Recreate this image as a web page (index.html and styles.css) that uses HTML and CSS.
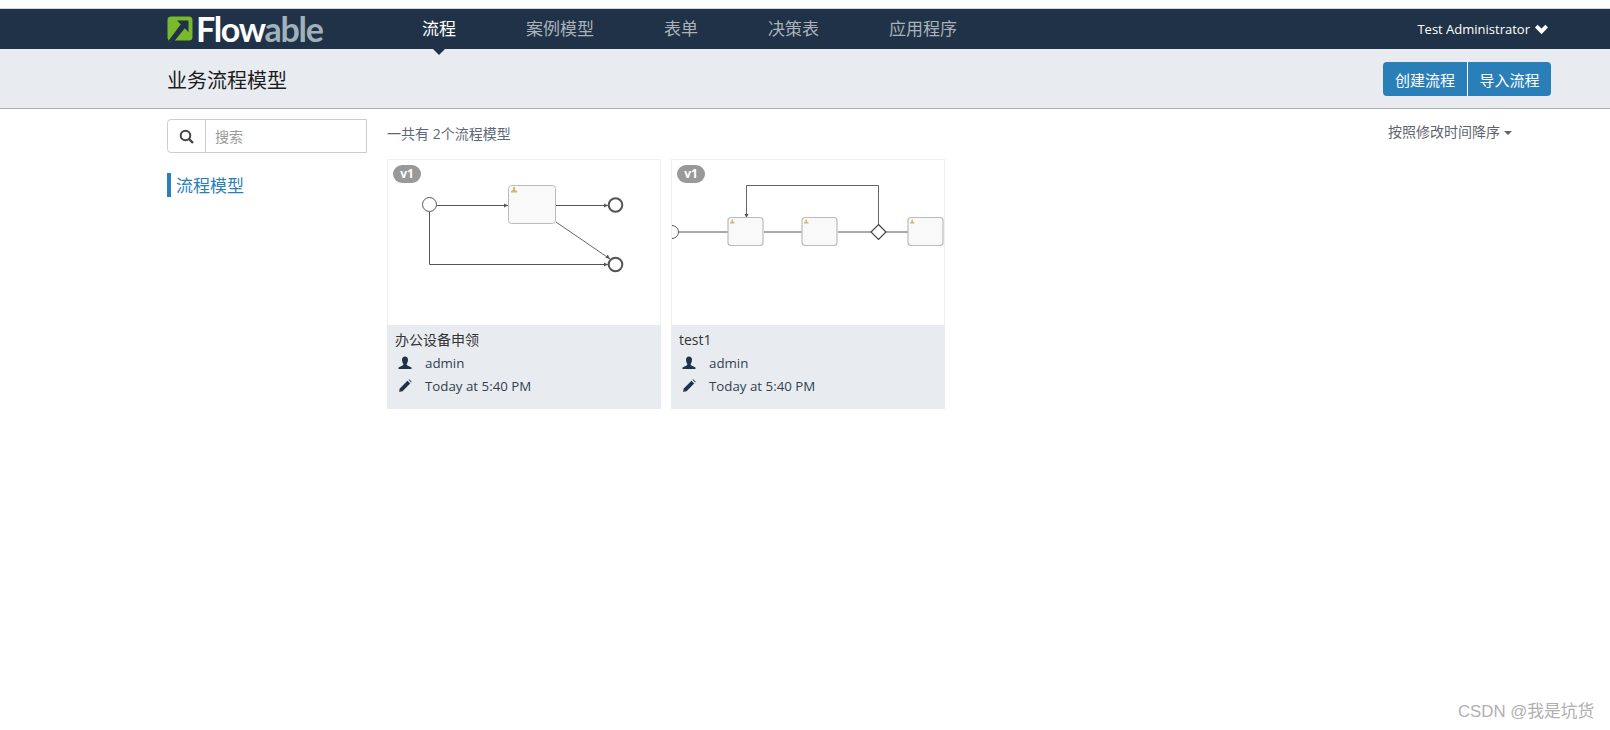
FILE: index.html
```html
<!DOCTYPE html>
<html lang="en">
<head>
  <meta charset="UTF-8">
  <meta name="viewport" content="width=device-width, initial-scale=1.0">
  <title>Flowable</title>
  <link rel="stylesheet" href="styles.css">
</head>
<body>
  <header class="navbar">
    <div class="wrap navbar-inner">
      <div class="logo">
        <svg class="logo-mark" width="26" height="26" viewBox="0 0 26 26">
          <path d="M4 0.500H22Q25.500 0.500 25.500 4V21Q25.500 24.500 22 24.500H8L2 25.500L0.500 22V4Q0.500 0.500 4 0.500Z" fill="#7ab92d"/>
          <path d="M10 4.500H21.500V16L17.800 12.300L7 25.500H1L13.800 8.300Z" fill="#1f3247"/>
        </svg>
        <span class="logo-text">Flow<span class="logo-text-soft">able</span></span>
      </div>
      <nav class="nav-links">
        <a class="nav-link active">流程</a>
        <a class="nav-link">案例模型</a>
        <a class="nav-link">表单</a>
        <a class="nav-link">决策表</a>
        <a class="nav-link">应用程序</a>
      </nav>
      <div class="user-menu">
        Test Administrator
        <svg width="13" height="11" viewBox="0 0 13 11"><path d="M0 3.500L2.600 0.800L6.500 4.600L10.400 0.800L13 3.500L6.500 10.200Z" fill="#fff"/></svg>
      </div>
    </div>
  </header>

  <div class="subheader">
    <div class="wrap subheader-inner">
      <h1>业务流程模型</h1>
      <div class="btn-group">
        <button class="btn">创建流程</button>
        <button class="btn">导入流程</button>
      </div>
    </div>
  </div>

  <div class="wrap main">
    <aside class="sidebar">
      <div class="search">
        <span class="search-icon">
          <svg width="15" height="15" viewBox="0 0 15 15"><circle cx="6.500" cy="6.500" r="4.800" fill="none" stroke="#444" stroke-width="2"/><path d="M10 10L14 14" stroke="#444" stroke-width="2.400"/></svg>
        </span>
        <input class="search-input" type="text" placeholder="搜索">
      </div>
      <a class="side-link">流程模型</a>
    </aside>

    <section class="content">
      <div class="content-top">
        <span class="count">一共有 2个流程模型</span>
        <span class="sort">按照修改时间降序<i class="caret"></i></span>
      </div>
      <div class="cards">
        <div class="card">
          <span class="badge">v1</span>
          <svg class="diagram" width="272" height="165" viewBox="0 0 272 165">
            <g fill="none" stroke="#555" stroke-width="1">
              <path d="M48.500 45.500H120"/>
              <path d="M168 45.500H220"/>
              <path d="M168 62L222 99" stroke="#666"/>
              <path d="M41.500 52V104.500H220"/>
            </g>
            <g fill="#555">
              <path d="M120 45.500L116 43.500V47.500Z"/>
              <path d="M220 45.500L216 43.500V47.500Z"/>
              <path d="M222 99L217.500 97.800L219.800 94.500Z"/>
              <path d="M220 104.500L216 102.500V106.500Z"/>
            </g>
            <circle cx="41.500" cy="44.500" r="7" fill="#fff" stroke="#555"/>
            <rect x="120.500" y="25.500" width="47" height="38" rx="3" fill="#f9f9f9" stroke="#bbb"/>
            <path d="M123 32.500H129V31L127 30V27H125V30L123 31Z" fill="#d1b574"/>
            <circle cx="227.500" cy="45" r="6.800" fill="#fff" stroke="#555" stroke-width="2"/>
            <circle cx="227.500" cy="104.500" r="6.800" fill="#fff" stroke="#555" stroke-width="2"/>
          </svg>
          <div class="card-info">
            <div class="card-title">办公设备申领</div>
            <div class="card-row">
              <svg width="14" height="14" viewBox="0 0 14 14"><path d="M0.500 13V11.500L4.500 9.500L5.500 8.500Q4 6.500 4 4Q4 0.500 7 0.500Q10 0.500 10 4Q10 6.500 8.500 8.500L9.500 9.500L13.500 11.500V13Z" fill="#1f3247"/></svg>
              <span>admin</span>
            </div>
            <div class="card-row">
              <svg width="14" height="14" viewBox="0 0 14 14"><path d="M1 13L1.800 9.500L9.500 1.800L12.200 4.500L4.500 12.200Z" fill="#1f3247"/><path d="M10.500 0.800L11.200 0.300L13.700 2.800L13.200 3.500Z" fill="#1f3247"/><path d="M1 13L1.500 10.800L3.200 12.500Z" fill="#a06a3c"/></svg>
              <span>Today at 5:40 PM</span>
            </div>
          </div>
        </div>

        <div class="card">
          <span class="badge">v1</span>
          <svg class="diagram" width="272" height="165" viewBox="0 0 272 165">
            <g fill="none" stroke="#555" stroke-width="1">
              <path d="M6 72H56"/>
              <path d="M92 72H130"/>
              <path d="M166 72H199"/>
              <path d="M214 72H236"/>
              <path d="M206.500 64V25.500H74.500V57" stroke="#666"/>
            </g>
            <g fill="#555">
              <path d="M74.500 58L72.500 54H76.500Z"/>
            </g>
            <circle cx="0" cy="72" r="6.500" fill="#fff" stroke="#555"/>
            <rect x="56" y="57.500" width="35" height="28" rx="3" fill="#f9f9f9" stroke="#bbb" stroke-width="1.200"/>
            <rect x="130" y="57.500" width="35" height="28" rx="3" fill="#f9f9f9" stroke="#bbb" stroke-width="1.200"/>
            <rect x="236" y="57.500" width="35" height="28" rx="3" fill="#f9f9f9" stroke="#bbb" stroke-width="1.200"/>
            <path d="M58 63.500H62.500V62.500L61 61.800V59.500H59.500V61.800L58 62.500Z" fill="#d1b574"/>
            <path d="M132 63.500H136.500V62.500L135 61.800V59.500H133.500V61.800L132 62.500Z" fill="#d1b574"/>
            <path d="M238 63.500H242.500V62.500L241 61.800V59.500H239.500V61.800L238 62.500Z" fill="#d1b574"/>
            <path d="M206.500 64.500L214 72L206.500 79.500L199 72Z" fill="#fff" stroke="#444" stroke-width="1.200"/>
          </svg>
          <div class="card-info">
            <div class="card-title">test1</div>
            <div class="card-row">
              <svg width="14" height="14" viewBox="0 0 14 14"><path d="M0.500 13V11.500L4.500 9.500L5.500 8.500Q4 6.500 4 4Q4 0.500 7 0.500Q10 0.500 10 4Q10 6.500 8.500 8.500L9.500 9.500L13.500 11.500V13Z" fill="#1f3247"/></svg>
              <span>admin</span>
            </div>
            <div class="card-row">
              <svg width="14" height="14" viewBox="0 0 14 14"><path d="M1 13L1.800 9.500L9.500 1.800L12.200 4.500L4.500 12.200Z" fill="#1f3247"/><path d="M10.500 0.800L11.200 0.300L13.700 2.800L13.200 3.500Z" fill="#1f3247"/><path d="M1 13L1.500 10.800L3.200 12.500Z" fill="#a06a3c"/></svg>
              <span>Today at 5:40 PM</span>
            </div>
          </div>
        </div>
      </div>
    </section>
  </div>

  <div class="watermark">CSDN @我是坑货</div>
</body>
</html>
```

FILE: styles.css
```css
* { box-sizing: border-box; }
html, body { height: 100%; }
body { margin: 0; background: #fff; color: #333; font-family: "Open Sans", "Noto Sans CJK SC", sans-serif; font-size: 14px; overflow: hidden; }

.wrap { width: 1384px; margin-left: 167px; }

.navbar { margin-top: 8px; height: 41px; background: #1f3247; border-top: 1px solid #d4d6d8; }
.navbar-inner { display: flex; align-items: center; height: 40px; }
.logo { display: flex; align-items: center; width: 220px; flex: none; }
.logo-mark { display: block; margin-right: 3px; }
.logo-text { color: #fff; font-family: Lato, sans-serif; font-weight: 700; font-size: 34px; line-height: 40px; letter-spacing: -1.300px; }
.logo-text-soft { color: #a0b1bb; }
.nav-links { display: flex; flex: 1; }
.nav-link { position: relative; padding: 0 35px; color: #a9b2ba; font-size: 17px; line-height: 40px; }
.nav-link.active { color: #fff; }
.nav-link.active::after { content: ""; position: absolute; left: 50%; bottom: -6px; margin-left: -6px; border-left: 6px solid transparent; border-right: 6px solid transparent; border-top: 6px solid #1f3247; }
.user-menu { color: #fff; font-size: 13px; display: flex; align-items: center; gap: 5px; padding-right: 3px; }

.subheader { height: 60px; background: #e8ecf0; border-bottom: 1px solid #a8b0bd; }
.subheader-inner { display: flex; justify-content: space-between; align-items: center; height: 59px; padding-top: 1px; }
.subheader h1 { margin: 0; font-size: 20px; font-weight: 400; color: #1c1c1c; }
.btn-group { display: flex; }
.btn { width: 84px; height: 34px; padding: 0; background: #2a7fb8; color: #fff; border: none; border-radius: 4px 0 0 4px; font: inherit; font-size: 15px; }
.btn + .btn { border-left: 1px solid #fff; border-radius: 0 4px 4px 0; }

.main { display: flex; }
.sidebar { width: 220px; flex: none; padding-top: 10px; }
.search { display: flex; width: 200px; height: 34px; border: 1px solid #ccc; border-radius: 4px 0 0 4px; }
.search-icon { width: 38px; flex: none; display: flex; align-items: center; justify-content: center; border-right: 1px solid #ccc; }
.search-input { flex: 1; min-width: 0; border: none; outline: none; padding: 0 9px; font: inherit; font-size: 14px; background: transparent; }
.search-input::placeholder { color: #999; }
.side-link { display: block; margin-top: 20px; padding: 2px 0 0 5px; border-left: 4px solid #2a7fb8; color: #2a7fb8; font-size: 17px; line-height: 22px; }

.content { flex: 1; }
.content-top { display: flex; justify-content: space-between; padding-top: 15px; padding-right: 39px; height: 50px; line-height: 20px; color: #5c6878; }
.sort { position: relative; top: -2px; color: #5f6570; font-size: 14px; }
.caret { display: inline-block; margin-left: 4px; vertical-align: middle; border-left: 4px solid transparent; border-right: 4px solid transparent; border-top: 4px solid #5f6570; }
.cards { display: flex; gap: 10px; }
.card { position: relative; width: 274px; height: 250px; border: 1px solid #eef0f2; border-bottom: none; }
.badge { position: absolute; left: 5px; top: 5px; width: 28px; height: 18px; border-radius: 9px; background: #999; color: #fff; font-size: 12px; font-weight: 700; line-height: 18px; text-align: center; }
.diagram { display: block; }
.card-info { height: 84px; margin: 0 -1px; padding: 3px 0 0 8px; background: #e8ecf0; }
.card-title { line-height: 23px; color: #333; }
.card-row { display: flex; align-items: center; height: 23.500px; padding-left: 3px; color: #343f50; font-size: 13.300px; }
.card-row span { margin-left: 13px; }

.watermark { position: absolute; left: 1458px; top: 701px; color: #b0b0b0; font-family: "Liberation Sans", "Noto Sans CJK SC", sans-serif; font-size: 16.800px; line-height: 22px; white-space: nowrap; }
```
